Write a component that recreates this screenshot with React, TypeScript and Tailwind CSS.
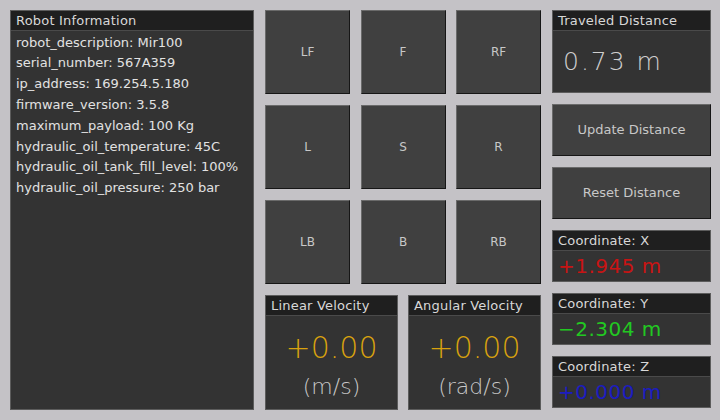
import React from "react";

const font = { fontFamily: '"DejaVu Sans", sans-serif' };

function Header({ children }: { children: React.ReactNode }) {
  return (
    <div className="h-[20px] shrink-0 bg-[#1f1f1f] border-b border-[#4a4a4a] px-[5px] flex items-center text-[13px] tracking-[0.2px] text-[#d8d8d8] leading-none">
      {children}
    </div>
  );
}

function Btn({ label, h }: { label: string; h: string }) {
  return (
    <div
      className={`${h} w-[85px] bg-[#404040] border border-t-[#6a6a6a] border-l-[#6a6a6a] border-b-[#161616] border-r-[#161616] flex items-center justify-center text-[12px] text-[#c8c8c8]`}
    >
      {label}
    </div>
  );
}

function Coord({ label, value, color }: { label: string; value: string; color: string }) {
  return (
    <div className="h-[52px] bg-[#333333] border border-[#5c5c5c] flex flex-col">
      <Header>{label}</Header>
      <div className={`flex-1 flex items-center px-[5px] text-[20px] tracking-[0.5px] font-normal ${color}`}>{value}</div>
    </div>
  );
}

export default function App() {
  const info = [
    "robot_description: Mir100",
    "serial_number: 567A359",
    "ip_address: 169.254.5.180",
    "firmware_version: 3.5.8",
    "maximum_payload: 100 Kg",
    "hydraulic_oil_temperature: 45C",
    "hydraulic_oil_tank_fill_level: 100%",
    "hydraulic_oil_pressure: 250 bar",
  ];
  return (
    <div className="w-[720px] h-[420px] bg-[#c4c2c6] pt-[10px] pl-[10px] flex gap-[11px]" style={font}>
      <div className="w-[244px] h-[400px] bg-[#333333] border border-[#5c5c5c] flex flex-col">
        <Header>Robot Information</Header>
        <div className="pl-[5px] pt-[1px] flex flex-col text-[13px] text-[#e2e2e2]">
          {info.map((l) => (
            <div key={l} className="h-[20.8px] flex items-center">
              {l}
            </div>
          ))}
        </div>
      </div>

      <div className="w-[276px] flex flex-col gap-[11px]">
        <div className="flex justify-between">
          <Btn label="LF" h="h-[84px]" />
          <Btn label="F" h="h-[84px]" />
          <Btn label="RF" h="h-[84px]" />
        </div>
        <div className="flex justify-between">
          <Btn label="L" h="h-[84px]" />
          <Btn label="S" h="h-[84px]" />
          <Btn label="R" h="h-[84px]" />
        </div>
        <div className="flex justify-between">
          <Btn label="LB" h="h-[84px]" />
          <Btn label="B" h="h-[84px]" />
          <Btn label="RB" h="h-[84px]" />
        </div>
        <div className="flex justify-between">
          {[
            ["Linear Velocity", "(m/s)"],
            ["Angular Velocity", "(rad/s)"],
          ].map(([t, u]) => (
            <div key={t} className="w-[133px] h-[115px] bg-[#333333] border border-[#5c5c5c] flex flex-col">
              <Header>{t}</Header>
              <div className="flex-1 flex flex-col items-center pt-[17px]">
                <div className="text-[30px] leading-none font-extralight text-[#d9a20e]">+0.00</div>
                <div className="mt-[13px] text-[22px] leading-none font-extralight text-[#c8c8c8]">{u}</div>
              </div>
            </div>
          ))}
        </div>
      </div>

      <div className="w-[159px] flex flex-col gap-[11px]">
        <div className="h-[83px] bg-[#333333] border border-[#5c5c5c] flex flex-col">
          <Header>Traveled Distance</Header>
          <div className="flex-1 flex items-center px-[10px] text-[25px] tracking-[2px] font-extralight text-[#cfcfcf]">0.73 m</div>
        </div>
        <div className="h-[52px] bg-[#404040] border border-t-[#6a6a6a] border-l-[#6a6a6a] border-b-[#161616] border-r-[#161616] flex items-center justify-center text-[13px] text-[#c8c8c8]">
          Update Distance
        </div>
        <div className="h-[52px] bg-[#404040] border border-t-[#6a6a6a] border-l-[#6a6a6a] border-b-[#161616] border-r-[#161616] flex items-center justify-center text-[13px] text-[#c8c8c8]">
          Reset Distance
        </div>
        <Coord label="Coordinate: X" value="+1.945 m" color="text-[#c81414]" />
        <Coord label="Coordinate: Y" value="−2.304 m" color="text-[#22c822]" />
        <Coord label="Coordinate: Z" value="+0.000 m" color="text-[#1c1cc0]" />
      </div>
    </div>
  );
}
